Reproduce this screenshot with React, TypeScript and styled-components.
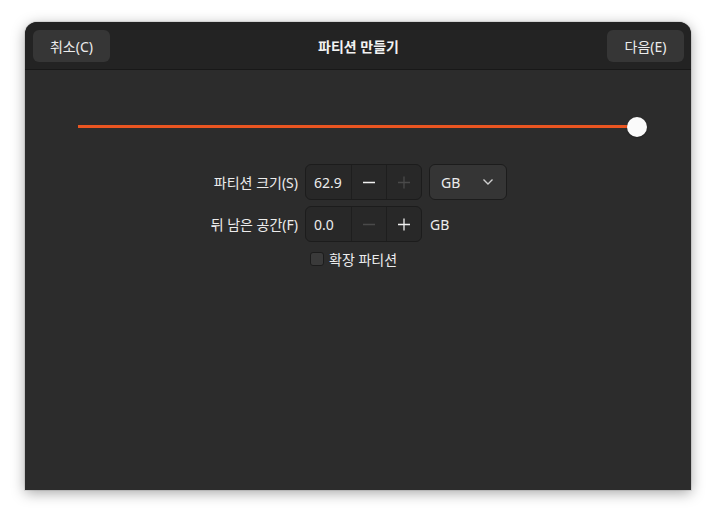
import React, { FC, useState } from 'react';
import styled, { createGlobalStyle } from 'styled-components';

const GlobalStyle = createGlobalStyle`
    html, body{
        margin: 0;
        padding: 0;
        background: #ffffff;
    }
    body{
        font-family: "Noto Sans", "Noto Sans CJK KR", sans-serif;
        font-size: 14px;
        color: #ececec;
    }
`;

const Page = styled.div`
    padding: 22px 0 0 25px;
    height: 518px;
    box-sizing: border-box;
`;

const Window = styled.div`
    width: 666px;
    height: 468px;
    display: flex;
    flex-direction: column;
    background: #2c2c2c;
    border-radius: 12px 12px 0 0;
    box-shadow: 0 3px 14px rgba(0,0,0,0.35), 0 0 0 1px rgba(0,0,0,0.08);
    overflow: hidden;
`;

const HeaderBar = styled.div`
    height: 47px;
    flex: 0 0 47px;
    display: flex;
    align-items: center;
    justify-content: space-between;
    padding: 0 7px 0 8px;
    background: #232323;
    border-bottom: 1px solid #181818;
`;

const Title = styled.div`
    font-weight: 700;
    font-size: 14px;
    color: #f2f2f2;
`;

const HeaderButton = styled.button`
    height: 32px;
    width: 77px;
    border: none;
    border-radius: 6px;
    background: #363636;
    color: #ececec;
    font-family: inherit;
    font-size: 14px;
    padding: 0;
`;

const Content = styled.div`
    flex: 1;
    display: flex;
    flex-direction: column;
    padding: 47px 44px 0 43px;
`;

const SliderWrap = styled.div`
    position: relative;
    height: 20px;
    margin: 0 0 27px 0;
`;

const Track = styled.div`
    position: absolute;
    left: 10px;
    right: 10px;
    top: 8px;
    height: 3px;
    background: #ea5521;
`;

const Knob = styled.div`
    position: absolute;
    top: 0;
    right: 0;
    width: 20px;
    height: 20px;
    border-radius: 50%;
    background: #fafafa;
    box-shadow: 0 1px 2px rgba(0,0,0,0.3);
`;

const FormGrid = styled.div`
    display: grid;
    grid-template-columns: 103px 117px 78px;
    column-gap: 7px;
    row-gap: 6px;
    align-items: center;
    margin-left: 127px;
`;

const Label = styled.div`
    text-align: right;
    white-space: nowrap;
`;

const SpinBox = styled.div`
    display: flex;
    height: 36px;
    box-sizing: border-box;
    border: 1px solid #1c1c1c;
    border-radius: 6px;
    background: #282828;
    overflow: hidden;
`;

const SpinValue = styled.div`
    width: 46px;
    padding-left: 8px;
    box-sizing: border-box;
    display: flex;
    align-items: center;
    border-right: 1px solid #1e1e1e;
`;

const SpinButton = styled.div<{ disabled?: boolean; last?: boolean }>`
    width: ${p => (p.last ? '34px' : '36px')};
    display: flex;
    align-items: center;
    justify-content: center;
    border-right: ${p => (p.last ? 'none' : '1px solid #1e1e1e')};
    box-sizing: border-box;
    color: ${p => (p.disabled ? '#4a4a4a' : '#f0f0f0')};
`;

const Dropdown = styled.div`
    height: 36px;
    box-sizing: border-box;
    border: 1px solid #1c1c1c;
    border-radius: 6px;
    background: #353535;
    display: flex;
    align-items: center;
    justify-content: space-between;
    padding: 0 12px 0 11px;
`;

const Unit = styled.div`
    padding-left: 1px;
`;

const CheckRow = styled.label`
    grid-column: 2 / 4;
    display: flex;
    align-items: center;
    gap: 5px;
    margin-left: 5px;
    margin-top: 1px;
`;

const CheckBox = styled.span`
    width: 14px;
    height: 14px;
    box-sizing: border-box;
    border: 1px solid #1c1c1c;
    border-radius: 3px;
    background: #3a3a3a;
`;

const Minus: FC = () => (
    <svg width="14" height="14" viewBox="0 0 14 14">
        <path d="M1 7.5h12" stroke="currentColor" strokeWidth="1.3" />
    </svg>
);

const Plus: FC = () => (
    <svg width="14" height="14" viewBox="0 0 14 14">
        <path d="M1 7.5h12M7 1.5v12" stroke="currentColor" strokeWidth="1.3" />
    </svg>
);

const Chevron: FC = () => (
    <svg width="12" height="8" viewBox="0 0 12 8">
        <path d="M1.5 1.5l4.5 4.5 4.5-4.5" stroke="#cfcfcf" strokeWidth="1.4" fill="none" />
    </svg>
);

const App: FC = () => {
    const [size] = useState<string>('62.9');
    const [free] = useState<string>('0.0');

    return (
        <Page>
            <GlobalStyle />
            <Window>
                <HeaderBar>
                    <HeaderButton>취소(C)</HeaderButton>
                    <Title>파티션 만들기</Title>
                    <HeaderButton>다음(E)</HeaderButton>
                </HeaderBar>
                <Content>
                    <SliderWrap>
                        <Track />
                        <Knob />
                    </SliderWrap>
                    <FormGrid>
                        <Label>파티션 크기(S)</Label>
                        <SpinBox>
                            <SpinValue>{size}</SpinValue>
                            <SpinButton><Minus /></SpinButton>
                            <SpinButton disabled last><Plus /></SpinButton>
                        </SpinBox>
                        <Dropdown>
                            <span>GB</span>
                            <Chevron />
                        </Dropdown>

                        <Label>뒤 남은 공간(F)</Label>
                        <SpinBox>
                            <SpinValue>{free}</SpinValue>
                            <SpinButton disabled><Minus /></SpinButton>
                            <SpinButton last><Plus /></SpinButton>
                        </SpinBox>
                        <Unit>GB</Unit>

                        <CheckRow>
                            <CheckBox />
                            확장 파티션
                        </CheckRow>
                    </FormGrid>
                </Content>
            </Window>
        </Page>
    );
};

export default App;
